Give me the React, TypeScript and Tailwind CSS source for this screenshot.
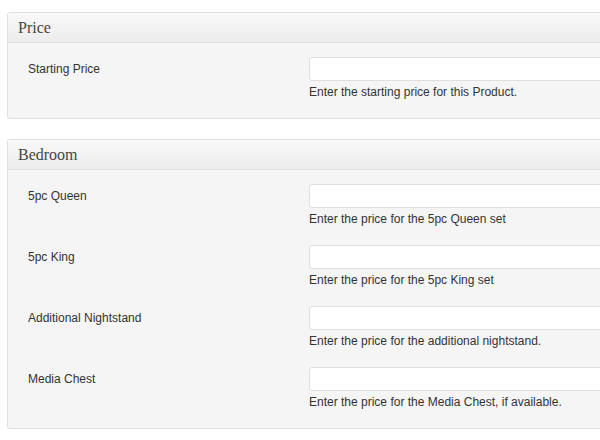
import React from "react";

type Field = { label: string; desc: string };

function Box({ title, fields }: { title: string; fields: Field[] }) {
  return (
    <div className="ml-[7px] w-[700px] rounded-[3px] border border-[#dfdfdf] bg-[#f5f5f5] shadow-[inset_0_1px_0_#fff]">
      <div className="flex h-[30px] items-center border-b border-[#dfdfdf] bg-gradient-to-b from-[#f9f9f9] to-[#ececec] px-[10px] font-['Liberation_Serif',serif] text-[16px] text-[#464646]">
        {title}
      </div>
      <div className="pt-[6px] pb-[8px]">
        {fields.map((f) => (
          <div key={f.label} className="flex px-[20px] pt-[8px] pb-[9px] font-['Liberation_Sans',Arial,sans-serif] text-[12px] text-[#333]">
            <div className="w-[281px] shrink-0 pt-[3px] leading-[18px]">{f.label}</div>
            <div className="flex flex-col">
              <div className="h-[24px] w-[360px] rounded-[3px] border border-[#dfdfdf] bg-white" />
              <div className="mt-[2px] leading-[18px]">{f.desc}</div>
            </div>
          </div>
        ))}
      </div>
    </div>
  );
}

export default function App() {
  return (
    <div className="h-[440px] w-[600px] overflow-hidden bg-white pt-[12px]">
      <Box title="Price" fields={[{ label: "Starting Price", desc: "Enter the starting price for this Product." }]} />
      <div className="h-[20px]" />
      <Box
        title="Bedroom"
        fields={[
          { label: "5pc Queen", desc: "Enter the price for the 5pc Queen set" },
          { label: "5pc King", desc: "Enter the price for the 5pc King set" },
          { label: "Additional Nightstand", desc: "Enter the price for the additional nightstand." },
          { label: "Media Chest", desc: "Enter the price for the Media Chest, if available." },
        ]}
      />
    </div>
  );
}
